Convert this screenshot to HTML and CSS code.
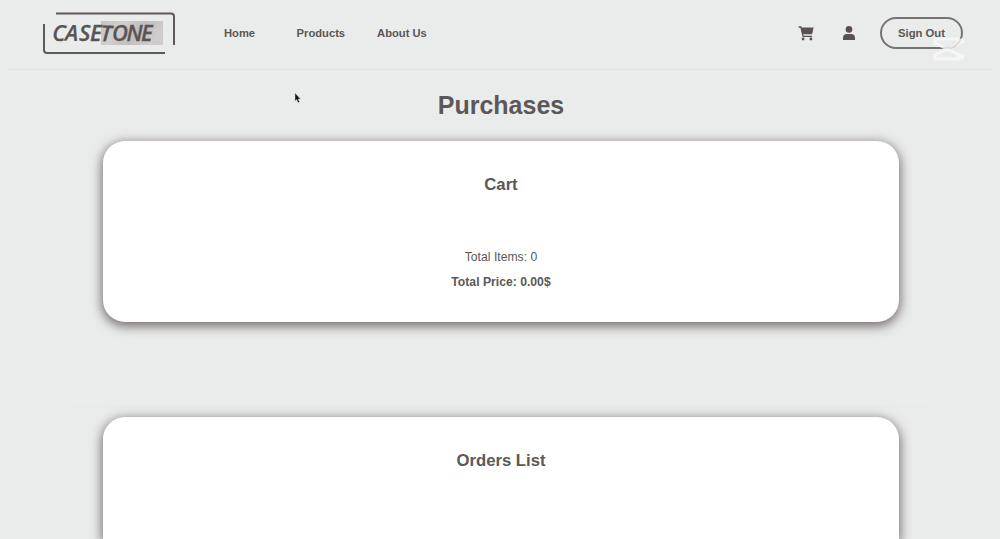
FILE: index.html
```html
<!DOCTYPE html>
<html lang="en">
<head>
    <meta charset="UTF-8">
    <meta name="viewport" content="width=device-width, initial-scale=1.0">
    <title>Casetone</title>
    <link rel="stylesheet" href="styles.css">
</head>
<body>
    <header class="navbar">
        <a class="logo" href="#">
            <svg width="134" height="44" viewBox="0 0 134 44">
                <defs>
                    <linearGradient id="brush" x1="0" y1="0" x2="1" y2="0.3">
                        <stop offset="0" stop-color="#c6c3c3"/>
                        <stop offset="0.35" stop-color="#d2cfcf"/>
                        <stop offset="0.65" stop-color="#c3bebe"/>
                        <stop offset="1" stop-color="#d0cccc"/>
                    </linearGradient>
                </defs>
                <rect x="59" y="10" width="62" height="24" fill="url(#brush)"/>
                <g fill="none" stroke="#5d5959" stroke-width="2">
                    <path d="M14 2.5H129Q132 2.5 132 5.5V34"/>
                    <path d="M2 13V39Q2 42 5 42H123"/>
                </g>
                <text class="logo-text" x="10 23 37 48 58 70 84.5 99" y="29.5 29.5 30 30 30 30 29.5 29.5" rotate="3 2 0 0 3 0 0 0">CASETONE</text>
            </svg>
        </a>
        <nav class="nav-links">
            <a href="#">Home</a>
            <a href="#">Products</a>
            <a href="#">About Us</a>
        </nav>
        <div class="nav-actions">
            <a class="icon cart-icon" href="#">
                <svg width="16" height="15" viewBox="0 0 16 15">
                    <path d="M0.6 1H2.9L5.1 10.4H14" fill="none" stroke="#5a5252" stroke-width="1.3"/>
                    <path d="M3 1.4H15.6L14.1 8.2H4.5Z" fill="#5a5252"/>
                    <circle cx="5.1" cy="13" r="1.4" fill="#5a5252"/>
                    <circle cx="12.9" cy="13" r="1.4" fill="#5a5252"/>
                </svg>
            </a>
            <a class="icon user-icon" href="#">
                <svg width="12" height="14" viewBox="0 0 12 14">
                    <circle cx="6" cy="3.4" r="3.3" fill="#5a5252"/>
                    <path d="M0 14V12Q0 8 4 8H8Q12 8 12 12V14Z" fill="#5a5252"/>
                </svg>
            </a>
            <button class="sign-out">Sign Out</button>
            <svg class="watermark" width="34" height="28" viewBox="0 0 34 28">
                <path d="M31 4L26 7V4H3V8L15 14L3 20V24H26V21L31 24M15 14L32 6M15 14L32 22" fill="none" stroke="#f8f9f8" stroke-opacity="0.8" stroke-width="3"/>
            </svg>
        </div>
    </header>

    <main class="content">
        <h1>Purchases</h1>
        <section class="card">
            <h2>Cart</h2>
            <div class="summary">
                <p>Total Items: 0</p>
                <p class="total">Total Price: 0.00$</p>
            </div>
        </section>
        <hr class="divider">
        <section class="card orders">
            <h2>Orders List</h2>
        </section>
    </main>

    <svg class="cursor" width="8" height="12" viewBox="0 0 8 12">
        <path d="M1 1V9L2.7 7.6L4 10.8L5.5 10.1L4.2 7.1H6.5Z" fill="#111" stroke="#c9cccb" stroke-width="0.5"/>
    </svg>
</body>
</html>
```

FILE: styles.css
```css
* {
    box-sizing: border-box;
}

body {
    font-family: "Liberation Sans", Arial, sans-serif;
    display: flex;
    flex-direction: column;
    margin: 0;
    height: 100vh;
    overflow: hidden;
    background-color: #eaeceb;
    color: #5b5857;
}

/* Navbar */
.navbar {
    display: flex;
    align-items: center;
    flex: none;
    height: 70px;
    margin: 0 6px 0 8px;
    padding: 0 31px 3px 34px;
    border-bottom: 1px solid #e2e4e3;
}

.logo {
    display: block;
    height: 44px;
    width: 134px;
    margin-bottom: 1px;
}

.logo-text {
    font-family: "Open Sans", sans-serif;
    font-size: 22px;
    font-weight: 600;
    font-style: italic;
    fill: #5a5555;
    stroke: #5a5555;
    stroke-width: 0.3px;
}

.nav-links {
    display: flex;
    margin-left: 48px;
}

.nav-links a {
    font-size: 11.2px;
    font-weight: bold;
    color: #5b5655;
    text-decoration: none;
    margin-right: 32px;
}

.nav-links a:first-child {
    margin-right: 41.5px;
}

.nav-actions {
    position: relative;
    display: flex;
    align-items: center;
    margin-left: auto;
}

.icon {
    display: flex;
}

.cart-icon {
    margin-right: 29px;
}

.user-icon {
    margin-right: 25px;
}

.sign-out {
    width: 83px;
    height: 32px;
    padding: 0;
    font-family: inherit;
    font-size: 11.3px;
    font-weight: bold;
    color: #5b5655;
    background: transparent;
    border: 2px solid #777272;
    border-radius: 16px;
}

.watermark {
    position: absolute;
    right: -3px;
    top: 18px;
}

/* Purchases */
.content {
    display: flex;
    flex: 1;
    flex-direction: column;
    align-items: center;
    padding-left: 2px;
}

h1 {
    font-size: 25px;
    line-height: 30px;
    margin: 20px 0 21px;
}

.card {
    flex: none;
    width: 796px;
    height: 181px;
    padding-top: 34px;
    text-align: center;
    background-color: #fff;
    border-radius: 22px;
    box-shadow: 0 3px 12px 1px #6f6868;
}

.card.orders {
    flex: 1;
    height: auto;
    border-radius: 22px 22px 0 0;
}

.card h2 {
    font-size: 16.7px;
    line-height: 20px;
    margin: 0;
}

.summary {
    margin-top: 50px;
}

.summary p {
    font-size: 12.2px;
    line-height: 25px;
    margin: 0;
}

.summary .total {
    font-weight: bold;
}

.divider {
    width: 858px;
    margin: 84px 0 10px;
    border: 0;
    border-top: 1px solid #e6e8e7;
}

.cursor {
    position: absolute;
    left: 294px;
    top: 92px;
}
```
